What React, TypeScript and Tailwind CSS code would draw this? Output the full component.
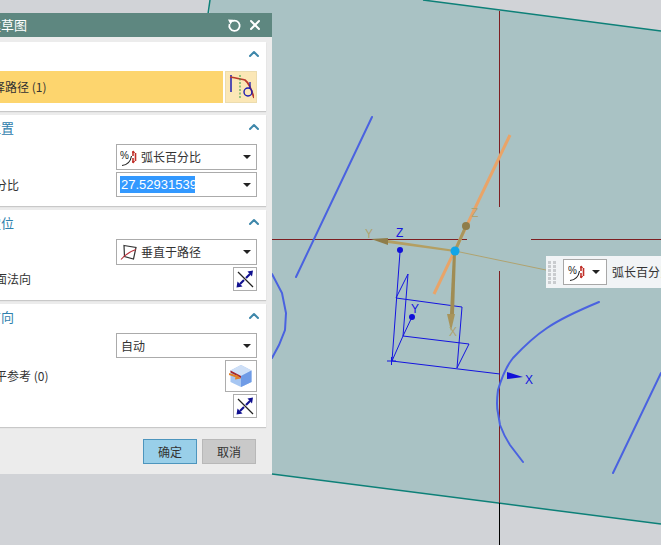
import React from "react";
import { ChevronUp, X } from "lucide-react";

const cjk = { fontFamily: '"Noto Sans CJK SC", "Liberation Sans", sans-serif' };

const ArcPercentIcon = () => (
  <span className="relative inline-block w-[18px] h-[19px] shrink-0">
    <svg width="19" height="19" viewBox="0 0 19 19" className="absolute inset-0">
      <text x="0" y="11" fontSize="10" fontFamily="Liberation Sans" fill="#222">%</text>
      <path d="M2 17.5C7 17 10.5 14 11.5 8" fill="none" stroke="#222" strokeWidth="1.1" />
      <path d="M13 3v5M13 10v5M15.5 5v8" stroke="#c0302a" strokeWidth="1.6" fill="none" />
      <path d="M11.8 5l1.7-2.5 1.7 2.5zM11.8 13l1.7 2.5 1.7-2.5z" fill="#c0302a" />
    </svg>
  </span>
);

const NormalIcon = () => (
  <svg width="18" height="18" viewBox="0 0 18 18" className="shrink-0">
    <path d="M4 2.5L16 4.5L13.5 16L4.5 13.5Z" fill="none" stroke="#333" strokeWidth="1.2" />
    <path d="M1 16.5C5 12 9 8.5 16 6.5" fill="none" stroke="#b8303a" strokeWidth="1.1" />
  </svg>
);

const FlipIcon = () => (
  <svg width="20" height="20" viewBox="0 0 20 20">
    <path d="M3 3L18 18" stroke="#222" strokeWidth="1.2" />
    <path d="M11 9L15 5" stroke="#10108f" strokeWidth="2.2" />
    <path d="M12.5 2.5L18 1.5L17 7.5Z" fill="#10108f" />
    <path d="M9 11L5 15" stroke="#10108f" strokeWidth="2.2" />
    <path d="M2.5 12.5L7.5 17.5L1.5 18.5Z" fill="#10108f" />
  </svg>
);

const PathIcon = () => (
  <svg width="26" height="26" viewBox="0 0 26 26">
    <path d="M3 1V18" stroke="#1c1cb0" strokeWidth="1.5" fill="none" />
    <path d="M2 3C8 4 12 5 17 6C21 9 24 17 26 24" stroke="#b93a2c" strokeWidth="1.7" fill="none" />
    <path d="M12 1V24" stroke="#2c9a40" strokeWidth="1" strokeDasharray="2 1.5" fill="none" />
    <circle cx="20" cy="18" r="4" stroke="#1c1cb0" strokeWidth="1.4" fill="none" />
    <path d="M22 8V14" stroke="#1c1cb0" strokeWidth="1.3" fill="none" />
  </svg>
);

const CubeIcon = () => (
  <svg width="24" height="24" viewBox="0 0 24 24">
    <path d="M12 1L22.5 6.5V18L12 23L1.5 18V6.5Z" fill="#a6c6f2" />
    <path d="M12 1L22.5 6.5L12 12L1.5 6.5Z" fill="#cfe0f7" />
    <path d="M12 12L22.5 6.5V18L12 23Z" fill="#6f9be6" />
    <path d="M1.5 6.5L12 12V14L1.5 8.5Z" fill="#a8232c" />
    <path d="M0 10L9 13" stroke="#e2812a" strokeWidth="2" fill="none" />
    <path d="M7 10.5L12 14.5L6 15.5Z" fill="#e2812a" />
  </svg>
);

const ResetIcon = () => (
  <svg width="15" height="15" viewBox="0 0 15 15" fill="none">
    <path d="M5 3.2A5.2 5.2 0 1 1 2.6 6" stroke="#fff" strokeWidth="1.8" />
    <path d="M1 1.5L6.5 1.8L3.5 6.5Z" fill="#fff" />
  </svg>
);

const Combo = ({ children, h = "h-[26px]" }: { children: React.ReactNode; h?: string }) => (
  <div className={`${h} w-[141px] bg-white border border-[#ababab] flex items-center pl-[3px] pr-[5px] text-[12px] text-[#333] overflow-hidden`}>
    <div className="flex-1 flex items-center gap-[3px] min-w-0 whitespace-nowrap">{children}</div>
    <span className="w-0 h-0 border-x-[4px] border-x-transparent border-t-[4px] border-t-[#222] shrink-0" />
  </div>
);

const IconButton = ({ children, big }: { children: React.ReactNode; big?: boolean }) => (
  <div className={`${big ? "w-[32px] h-[32px]" : "w-[24px] h-[24px]"} bg-white border border-[#adadad] flex items-center justify-center`}>
    {children}
  </div>
);

const Section = ({ title, h, children }: { title?: string; h: string; children: React.ReactNode }) => (
  <section className={`${h} bg-white shadow-[0_1px_1px_#c8c8c8] pr-[9px] flex flex-col`}>
    <div className="h-[24px] mt-[1px] flex items-center justify-between shrink-0">
      <span className="-ml-[12px] text-[13px] text-[#2f80ad]">{title}</span>
      <ChevronUp size={16} strokeWidth={3} className="text-[#3e87aa] -mr-[5px] -mt-[3px]" />
    </div>
    {children}
  </section>
);

const Row = ({ label, children, className = "" }: { label?: string; children: React.ReactNode; className?: string }) => (
  <div className={`flex items-center justify-between ${className}`}>
    <span className="-ml-[17px] text-[12px] text-[#333] whitespace-nowrap">{label}</span>
    {children}
  </div>
);

const Viewport = () => (
  <svg width="661" height="545" viewBox="0 0 661 545" className="absolute inset-0" style={{ fontFamily: "Liberation Sans" }}>
    <path d="M210 0H423L661 31V524L272 474H200Z" fill="#a9c2c4" />
    <path d="M423 0L661 31M272 474L661 524M210 0L208 14" stroke="#0d8078" strokeWidth="1.5" fill="none" />

    <path d="M272 239.5H467M531 239.5H661M499.5 11V207M499.5 271V503" stroke="#7d1f22" strokeWidth="1" fill="none" />
    <path d="M499.5 503V545" stroke="#000" strokeWidth="1" />

    <g stroke="#4a62e0" strokeWidth="2" fill="none" strokeLinecap="round">
      <path d="M372 117L296 277" />
      <path d="M272 274L282 293L286 313L285 330L279 345L272 358" />
      <path d="M599 302C575 312 560 319 547 328C535 336 527 343 513 358C505 368 501 380 498 390C497 398 496 405 498 413L500 425C503 433 506 439 510 445L523 462" />
      <path d="M613 473L661 373" />
    </g>

    <g stroke="#1414e0" strokeWidth="1" fill="none">
      <path d="M400 252L392 361L500 374" />
      <path d="M396 298L462 307L457 368" />
      <path d="M403 336L469 344L457 368" />
      <path d="M408 274L403 336L392 361" />
      <path d="M408 274L396 298" />
      <path d="M403 336L412 317" />
      <path d="M387 361H396M391.5 357V365" />
    </g>
    <circle cx="412" cy="317" r="3" fill="#1010d8" />
    <circle cx="400" cy="250" r="3" fill="#1010d8" />
    <path d="M507 372L523 377L507 379Z" fill="#1010d8" />
    <text x="396" y="237" fontSize="12" fill="#1414e0">Z</text>
    <text x="411" y="313" fontSize="12" fill="#1414e0">Y</text>
    <text x="525" y="384" fontSize="12" fill="#1414e0">X</text>

    <path d="M455 251L546 270" stroke="#b0a370" strokeWidth="1" />
    <path d="M434 294L510 135" stroke="#e9a468" strokeWidth="3" />
    <path d="M455 251L466 226" stroke="#a8965e" strokeWidth="3" />
    <circle cx="466" cy="226" r="4" fill="#8f7d4a" />
    <path d="M455 250L388 240L388 243L455 252Z" fill="#b49f62" />
    <path d="M371 239L388 238L388 245Z" fill="#8f7d4a" />
    <path d="M453 252L456 252L454 314H450Z" fill="#a08c54" />
    <path d="M447 314H455L451 331Z" fill="#a8945a" />
    <circle cx="455" cy="251" r="4.5" fill="#12a5e8" />
    <text x="471" y="217" fontSize="12" fill="#b0a370">Z</text>
    <text x="365" y="238" fontSize="12" fill="#b0a370">Y</text>
    <text x="449" y="336" fontSize="12" fill="#b0a370">X</text>
  </svg>
);

export default function App() {
  return (
    <div className="relative w-[661px] h-[545px] overflow-hidden bg-[#d1d3d7]" style={cjk}>
      <Viewport />

      {/* floating on-screen input */}
      <div className="absolute left-[546px] top-[256px] w-[130px] h-[32px] bg-[#f1f4f6] flex items-center">
        <div className="w-[8px] ml-[2px] grid grid-cols-2 gap-[1px]">
          {Array.from({ length: 12 }).map((_, i) => (
            <span key={i} className="w-[3px] h-[3px] bg-[#c9cccf]" />
          ))}
        </div>
        <div className="ml-[7px] w-[44px] h-[26px] bg-white border border-[#a8a8a8] flex items-center pl-[4px] pr-[6px] justify-between">
          <ArcPercentIcon />
          <span className="w-0 h-0 border-x-[4px] border-x-transparent border-t-[4px] border-t-[#222]" />
        </div>
        <span className="ml-[5px] text-[12px] text-[#333] whitespace-nowrap">弧长百分比</span>
      </div>

      {/* dialog */}
      <div className="absolute left-0 top-[13px] w-[272px] h-[461px] bg-[#ececec] flex flex-col">
        <header className="h-[24px] bg-[#5e8780] flex items-center justify-between pr-[9px] shrink-0">
          <span className="-ml-[25px] text-[13px] text-white whitespace-nowrap">创建草图</span>
          <div className="flex items-center gap-[5px] text-white">
            <ResetIcon />
            <X size={16} strokeWidth={3} />
          </div>
        </header>

        <div className="w-[266px] flex flex-col gap-[4px] mt-[5px]">
          <Section h="h-[69px]">
            <div className="mt-[4px] flex items-stretch h-[32px] gap-[2px]">
              <div className="w-[223px] bg-[#fdd56e] flex items-center">
                <span className="-ml-[19px] text-[12px] text-[#333] whitespace-nowrap">选择路径 (1)</span>
              </div>
              <div className="w-[32px] bg-[#fbe7b6] border border-[#ecdcae] flex items-center justify-center">
                <PathIcon />
              </div>
            </div>
          </Section>

          <Section title="位置" h="h-[91px]">
            <Row className="mt-[4px]">
              <Combo>
                <ArcPercentIcon />
                <span>弧长百分比</span>
              </Combo>
            </Row>
            <Row label="百分比" className="mt-[2px]">
              <Combo h="h-[25px]">
                <span className="block w-[75px] overflow-hidden bg-[#3399ff] text-white text-[13px] leading-[17px] pl-[1px]" style={{ fontFamily: "Liberation Sans" }}>
                  27.52931539842
                </span>
              </Combo>
            </Row>
          </Section>

          <Section title="定位" h="h-[90px]">
            <Row className="mt-[4px]">
              <Combo>
                <NormalIcon />
                <span>垂直于路径</span>
              </Combo>
            </Row>
            <Row label="曲面法向" className="mt-[2px]">
              <IconButton><FlipIcon /></IconButton>
            </Row>
          </Section>

          <Section title="方向" h="h-[123px]">
            <Row className="mt-[4px]">
              <Combo h="h-[25px]">
                <span className="pl-[1px]">自动</span>
              </Combo>
            </Row>
            <Row label="水平参考 (0)" className="mt-[2px]">
              <IconButton big><CubeIcon /></IconButton>
            </Row>
            <Row className="mt-[2px]">
              <IconButton><FlipIcon /></IconButton>
            </Row>
          </Section>
        </div>

        <div className="mt-[12px] flex justify-end gap-[5px] pr-[16px]">
          <button className="w-[54px] h-[25px] bg-[#99cfe9] border border-[#4d95bd] text-[12px] text-[#333]">确定</button>
          <button className="w-[54px] h-[25px] bg-[#c9c9c9] border border-[#b8b8b8] text-[12px] text-[#333]">取消</button>
        </div>
      </div>
    </div>
  );
}
